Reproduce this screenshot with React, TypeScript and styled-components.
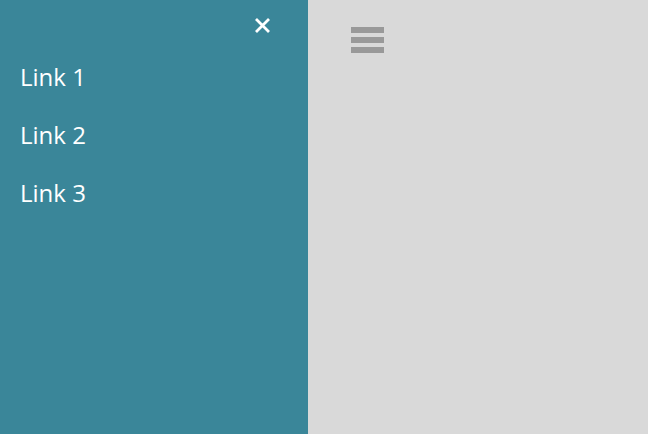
import React from "react";
import styled, { createGlobalStyle } from "styled-components";

const Global = createGlobalStyle`
  html, body { margin: 0; padding: 0; height: 100%; }
  #root { height: 100%; }
  body { font-family: "Open Sans", "Noto Sans", sans-serif; background: #d9d9d9; }
`;

const Page = styled.div`
  display: flex;
  width: 648px;
  height: 434px;
  overflow: hidden;
`;

const Sidebar = styled.nav`
  width: 308px;
  flex-shrink: 0;
  background: #3a8699;
  display: flex;
  flex-direction: column;
  padding: 12px 0 0 20px;
  box-sizing: border-box;
`;

const CloseRow = styled.div`
  display: flex;
  justify-content: flex-end;
  padding-right: 33px;
  height: 30px;
  margin-bottom: 18px;
`;

const CloseButton = styled.button`
  background: none;
  border: none;
  padding: 0;
  width: 26px;
  height: 26px;
  display: flex;
  align-items: center;
  justify-content: center;
  cursor: pointer;
`;

const LinkList = styled.ul`
  list-style: none;
  margin: 0;
  padding: 0;
  display: flex;
  flex-direction: column;
  gap: 24px;
`;

const NavLink = styled.a`
  color: #ffffff;
  font-size: 24px;
  line-height: 34px;
  text-decoration: none;
  display: block;
`;

const Main = styled.main`
  flex: 1;
  background: #d9d9d9;
  padding: 27px 0 0 43px;
`;

const Burger = styled.button`
  background: none;
  border: none;
  padding: 0;
  width: 33px;
  display: flex;
  flex-direction: column;
  gap: 4px;
  cursor: pointer;
`;

const Bar = styled.span`
  display: block;
  height: 6px;
  width: 33px;
  background: #999999;
`;

export default function App() {
  return (
    <>
      <Global />
      <Page>
        <Sidebar>
          <CloseRow>
            <CloseButton aria-label="close">
              <svg width="17" height="17" viewBox="0 0 17 17">
                <path d="M2 2 L15 15 M15 2 L2 15" stroke="#fff" strokeWidth="2.8" />
              </svg>
            </CloseButton>
          </CloseRow>
          <LinkList>
            <li><NavLink href="#">Link 1</NavLink></li>
            <li><NavLink href="#">Link 2</NavLink></li>
            <li><NavLink href="#">Link 3</NavLink></li>
          </LinkList>
        </Sidebar>
        <Main>
          <Burger aria-label="menu">
            <Bar />
            <Bar />
            <Bar />
          </Burger>
        </Main>
      </Page>
    </>
  );
}
